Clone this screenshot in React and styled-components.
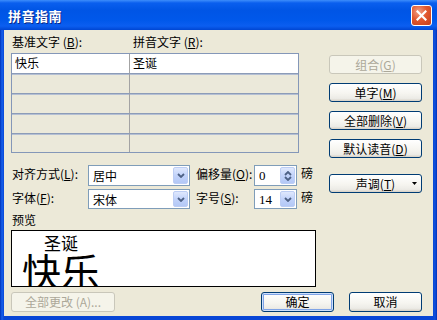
import React from 'react'
import styled, { createGlobalStyle, css } from 'styled-components'

const GlobalStyle = createGlobalStyle`
  html, body {
    margin: 0;
    padding: 0;
    background: #ffffff;
  }
  body {
    font-family: "Noto Sans CJK SC", "Liberation Sans", sans-serif;
    font-size: 12px;
    color: #000;
  }
`

const Window = styled.div`
  width: 437px;
  height: 320px;
  display: flex;
  flex-direction: column;
  background: #0846d6;
  overflow: hidden;
`

const TitleBar = styled.div`
  height: 30px;
  flex: none;
  display: flex;
  align-items: center;
  justify-content: space-between;
  padding: 0 5px 0 8px;
  background: linear-gradient(180deg, #3d8dfb 0px, #0a5fee 3px, #0055e5 10px, #0058ea 20px, #0b5ef0 26px, #0046d2 30px);
`

const Title = styled.span`
  color: #fff;
  font-weight: bold;
  font-size: 13px;
  letter-spacing: 0.5px;
  text-shadow: 1px 1px 0 #0a2a8a;
`

const CloseButton = styled.div`
  width: 21px;
  height: 21px;
  box-sizing: border-box;
  border: 1px solid #fff;
  border-radius: 3px;
  background: radial-gradient(circle at 35% 30%, #f0a088 0%, #e2582f 45%, #c23d1c 100%);
  display: flex;
  align-items: center;
  justify-content: center;
`

const Frame = styled.div`
  flex: 1;
  display: flex;
  padding: 0 4px 4px 4px;
  background: linear-gradient(90deg, #0031b8 0px, #1660ec 2px, #0846d6 4px, #0846d6 calc(100% - 4px), #1050dc calc(100% - 2px), #0031b8 100%);
`

const Body = styled.div`
  flex: 1;
  background: #ece9d8;
  display: flex;
  flex-direction: column;
  padding: 4px 11px 0 7px;
`

const Top = styled.div`
  display: flex;
  gap: 13px;
`

const LeftPane = styled.div`
  width: 305px;
  display: flex;
  flex-direction: column;
`

const RightPane = styled.div`
  width: 93px;
  display: flex;
  flex-direction: column;
  padding-top: 21px;
`

const Key = styled.span`
  text-decoration: underline;
`

const ColumnLabels = styled.div`
  display: grid;
  grid-template-columns: 119px 1fr;
  height: 16px;
  line-height: 16px;
  margin-bottom: 3px;
`

const ColumnLabel = styled.span`
  padding-left: ${p => p.$pad}px;
  white-space: nowrap;
`

const Table = styled.div`
  width: 288px;
  box-sizing: border-box;
  border: 1px solid #8497b8;
  display: flex;
  flex-direction: column;
`

const Row = styled.div`
  display: grid;
  grid-template-columns: 118px 1fr;
  height: ${p => (p.$last ? 18 : 19)}px;
  background: ${p => (p.$filled ? '#ffffff' : '#ebe9da')};
  ${p =>
    !p.$first &&
    css`
      border-top: 1px solid #8c9cb8;
      box-shadow: inset 0 1px 0 #b4bfd3;
    `}
`

const Cell = styled.div`
  padding-left: 3px;
  line-height: 18px;
  border-right: ${p => (p.$divider ? '1px solid #a3a3a3' : 'none')};
`

const FormGrid = styled.div`
  display: grid;
  grid-template-columns: 77px 102px 64px 43px auto;
  row-gap: 3px;
  margin-top: 12px;
  align-items: center;
`

const FieldLabel = styled.span`
  padding-left: ${p => p.$pad || 1}px;
  white-space: nowrap;
  align-self: start;
  line-height: 18px;
`

const Unit = styled.span`
  padding-left: 4px;
  align-self: start;
  line-height: 16px;
`

const Field = styled.div`
  height: ${p => p.$h || 21}px;
  box-sizing: border-box;
  border: 1px solid #7f9db9;
  background: #fff;
  display: flex;
  align-items: stretch;
  padding: 1px;
`

const FieldText = styled.span`
  flex: 1;
  padding-left: 3px;
  line-height: 17px;
  font-family: ${p => (p.$serif ? '"Liberation Serif", serif' : 'inherit')};
  font-size: ${p => (p.$serif ? 13 : 12)}px;
`

const ArrowBox = styled.div`
  width: 15px;
  box-sizing: border-box;
  border: 1px solid #bccdf4;
  border-radius: 2px;
  background: linear-gradient(180deg, #dfe8fd 0%, #c2d3fa 50%, #b3c8f6 100%);
  display: flex;
  flex-direction: column;
  align-items: center;
  justify-content: center;
`

const PreviewLabel = styled.div`
  margin-top: 3px;
  height: 16px;
  line-height: 16px;
  padding-left: 1px;
`

const PreviewBox = styled.div`
  margin-top: 2px;
  height: 57px;
  box-sizing: border-box;
  border: 1px solid #000;
  background: #fff;
  overflow: hidden;
  padding: 2px 0 0 10px;
`

const Ruby = styled.div`
  display: inline-flex;
  flex-direction: column;
  align-items: center;
`

const RubyTop = styled.span`
  font-size: 17px;
  line-height: 19px;
`

const RubyBase = styled.span`
  font-size: 39px;
  line-height: 34px;
  height: 34px;
  overflow: hidden;
  padding-top: 1px;
`

const Button = styled.div`
  width: ${p => p.$w || 93}px;
  height: ${p => p.$h || 19}px;
  margin-top: ${p => p.$mt || 0}px;
  margin-left: ${p => p.$ml || 0}px;
  box-sizing: border-box;
  border-radius: 3px;
  display: flex;
  align-items: center;
  justify-content: center;
  white-space: nowrap;
  line-height: 1;
  ${p =>
    p.$disabled
      ? css`
          border: 1px solid #c9c7ba;
          background: #f5f4ea;
          color: #aca899;
        `
      : css`
          border: 1px solid #003c74;
          background: linear-gradient(180deg, #ffffff 0%, #f6f5f0 55%, #ecebe6 85%, #d6d0c5 100%);
          color: #000;
        `}
  ${p =>
    p.$default &&
    css`
      box-shadow: inset 0 0 0 1px #cee0fb, inset 0 0 0 2px #7fa3e6;
    `}
`

const ButtonText = styled.span`
  flex: 1;
  text-align: center;
`

const DropMark = styled.span`
  width: 14px;
  display: flex;
  justify-content: center;
`

const BottomRow = styled.div`
  display: flex;
  align-items: center;
  margin-top: 5px;
`

const Spacer = styled.div`
  flex: 1;
`

const Chevron = ({ up }) => (
  <svg width="8" height="5" viewBox="0 0 8 5">
    <path
      d={up ? 'M1 4 L4 1 L7 4' : 'M1 1 L4 4 L7 1'}
      fill="none"
      stroke="#4d6185"
      strokeWidth="1.8"
    />
  </svg>
)

const Combo = ({ value, serif, h }) => (
  <Field $h={h}>
    <FieldText $serif={serif}>{value}</FieldText>
    <ArrowBox>
      <Chevron />
    </ArrowBox>
  </Field>
)

const Spin = ({ value }) => (
  <Field>
    <FieldText $serif>{value}</FieldText>
    <ArrowBox>
      <Chevron up />
      <Chevron />
    </ArrowBox>
  </Field>
)

const rows = [
  ['快乐', '圣诞'],
  ['', ''],
  ['', ''],
  ['', ''],
  ['', ''],
]

export default function App() {
  return (
    <>
      <GlobalStyle />
      <Window>
        <TitleBar>
          <Title>拼音指南</Title>
          <CloseButton>
            <svg width="11" height="11" viewBox="0 0 11 11">
              <path d="M1.5 1.5 L9.5 9.5 M9.5 1.5 L1.5 9.5" stroke="#fff" strokeWidth="2.2" strokeLinecap="square" />
            </svg>
          </CloseButton>
        </TitleBar>
        <Frame>
          <Body>
            <Top>
              <LeftPane>
                <ColumnLabels>
                  <ColumnLabel $pad={1}>基准文字 (<Key>B</Key>):</ColumnLabel>
                  <ColumnLabel $pad={3}>拼音文字 (<Key>R</Key>):</ColumnLabel>
                </ColumnLabels>
                <Table>
                  {rows.map((r, i) => (
                    <Row key={i} $first={i === 0} $filled={i === 0} $last={i === rows.length - 1}>
                      <Cell $divider>{r[0]}</Cell>
                      <Cell>{r[1]}</Cell>
                    </Row>
                  ))}
                </Table>
                <FormGrid>
                  <FieldLabel>对齐方式(<Key>L</Key>):</FieldLabel>
                  <Combo value="居中" />
                  <FieldLabel $pad={6}>偏移量(<Key>O</Key>):</FieldLabel>
                  <Spin value="0" />
                  <Unit>磅</Unit>
                  <FieldLabel>字体(<Key>F</Key>):</FieldLabel>
                  <Combo value="宋体" h={20} />
                  <FieldLabel $pad={6}>字号(<Key>S</Key>):</FieldLabel>
                  <Combo value="14" serif h={20} />
                  <Unit>磅</Unit>
                </FormGrid>
                <PreviewLabel>预览</PreviewLabel>
                <PreviewBox>
                  <Ruby>
                    <RubyTop>圣诞</RubyTop>
                    <RubyBase>快乐</RubyBase>
                  </Ruby>
                </PreviewBox>
              </LeftPane>
              <RightPane>
                <Button $disabled>组合(<Key>G</Key>)</Button>
                <Button $mt={9}>单字(<Key>M</Key>)</Button>
                <Button $mt={9}>全部删除(<Key>V</Key>)</Button>
                <Button $mt={9}>默认读音(<Key>D</Key>)</Button>
                <Button $mt={16}>
                  <DropMark />
                  <ButtonText>声调(<Key>T</Key>)</ButtonText>
                  <DropMark>
                    <svg width="5" height="3" viewBox="0 0 5 3">
                      <path d="M0 0 H5 L2.5 3 Z" fill="#000" />
                    </svg>
                  </DropMark>
                </Button>
              </RightPane>
            </Top>
            <BottomRow>
              <Button $disabled $w={104} $h={20}>全部更改 (A)...</Button>
              <Spacer />
              <Button $default $w={73} $h={20}>确定</Button>
              <Button $w={73} $h={20} $ml={15}>取消</Button>
            </BottomRow>
          </Body>
        </Frame>
      </Window>
    </>
  )
}
